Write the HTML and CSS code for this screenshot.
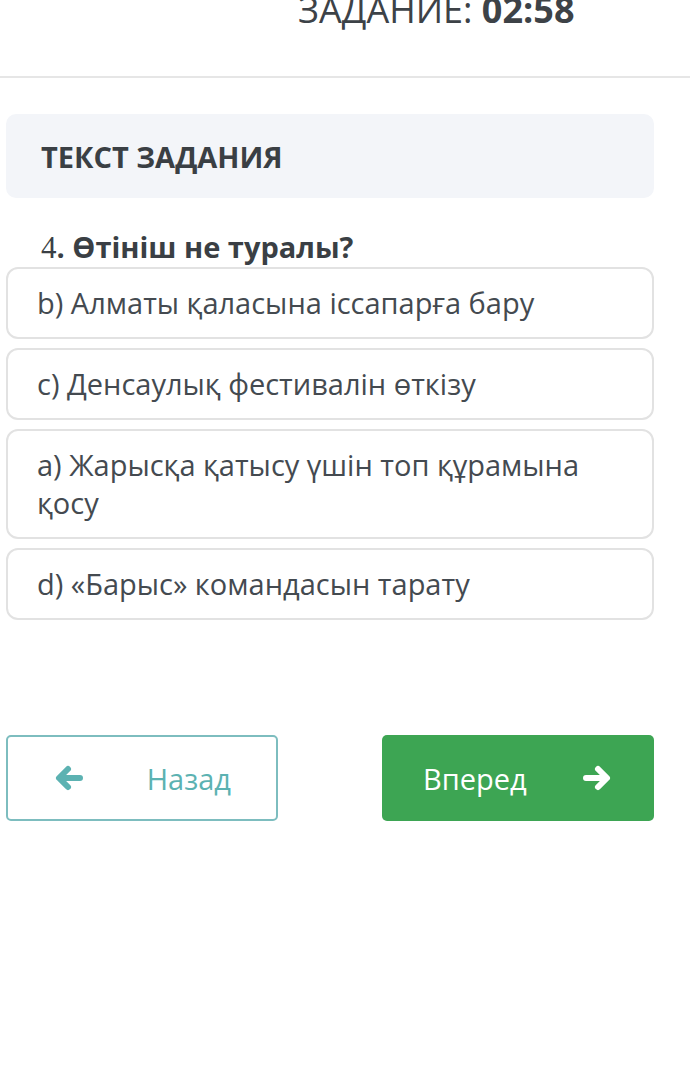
FILE: index.html
```html
<!DOCTYPE html>
<html lang="kk">
<head>
<meta charset="utf-8">
<title>Задание</title>
<link rel="stylesheet" href="styles.css">
</head>
<body>
<header class="header">
  <div class="timer">ЗАДАНИЕ: <b>02:58</b></div>
</header>
<main class="main">
  <div class="task-box"><h2 class="task-title">ТЕКСТ ЗАДАНИЯ</h2></div>
  <p class="question"><span class="qnum">4</span>. Өтініш не туралы?</p>
  <div class="options">
    <div class="option">b) Алматы қаласына іссапарға бару</div>
    <div class="option">c) Денсаулық фестивалін өткізу</div>
    <div class="option">a) Жарысқа қатысу үшін топ құрамына қосу</div>
    <div class="option">d) «Барыс» командасын тарату</div>
  </div>
  <div class="nav">
    <button class="btn btn-back">
      <svg class="arrow" width="30" height="28" viewBox="0 0 30 28"><path d="M26 14H6M14 5L5 14L14 23" fill="none" stroke="currentColor" stroke-width="6" stroke-linecap="round" stroke-linejoin="round"/></svg>
      <span class="btn-label">Назад</span>
    </button>
    <button class="btn btn-next">
      <span class="btn-label">Вперед</span>
      <svg class="arrow" width="30" height="28" viewBox="0 0 30 28"><path d="M4 14H24M16 5L25 14L16 23" fill="none" stroke="currentColor" stroke-width="6" stroke-linecap="round" stroke-linejoin="round"/></svg>
    </button>
  </div>
</main>
</body>
</html>
```
FILE: styles.css
```css
html, body { margin: 0; padding: 0; background: #fff; }
body {
  font-family: "Open Sans", "Noto Sans", sans-serif;
  color: #3d4247;
}
.header {
  height: 76px;
  border-bottom: 2px solid #e6e6e6;
  overflow: hidden;
  padding-left: 298px;
}
.timer {
  font-size: 36px;
  line-height: 36px;
  margin-top: -8px;
  color: #3d4247;
  white-space: nowrap;
}
.timer b { font-weight: 700; }
.main {
  padding: 0 36px 0 6px;
  margin-top: 36px;
}
.task-box {
  height: 84px;
  background: #f3f5f9;
  border-radius: 10px;
  display: flex;
  align-items: center;
  padding-left: 35px;
}
.task-title {
  margin: 0;
  font-size: 29px;
  font-weight: 700;
  color: #3a3f44;
}
.question {
  margin: 30px 0 0 35px;
  font-size: 29px;
  line-height: 38px;
  font-weight: 700;
  color: #3a3f44;
}
.qnum { font-family: "Liberation Serif", serif; font-weight: 400; font-size: 31px; }
.options {
  display: flex;
  flex-direction: column;
  gap: 9px;
}
.option {
  border: 2px solid #e2e2e2;
  border-radius: 12px;
  padding: 15px 29px;
  font-size: 29px;
  line-height: 38px;
  color: #444a50;
}
.nav {
  margin-top: 115px;
  display: flex;
  justify-content: space-between;
}
.btn {
  width: 272px;
  height: 86px;
  border-radius: 5px;
  font-family: inherit;
  font-size: 29px;
  display: flex;
  align-items: center;
  cursor: pointer;
}
.btn-back {
  background: #fff;
  border: 2px solid #7dbdbf;
  color: #5cb2b2;
  padding: 0 45px 0 46px;
  justify-content: space-between;
}
.btn-next {
  background: #3da553;
  border: none;
  color: #fff;
  padding: 0 42px 0 41px;
  justify-content: space-between;
}
.arrow { display: block; }
```
